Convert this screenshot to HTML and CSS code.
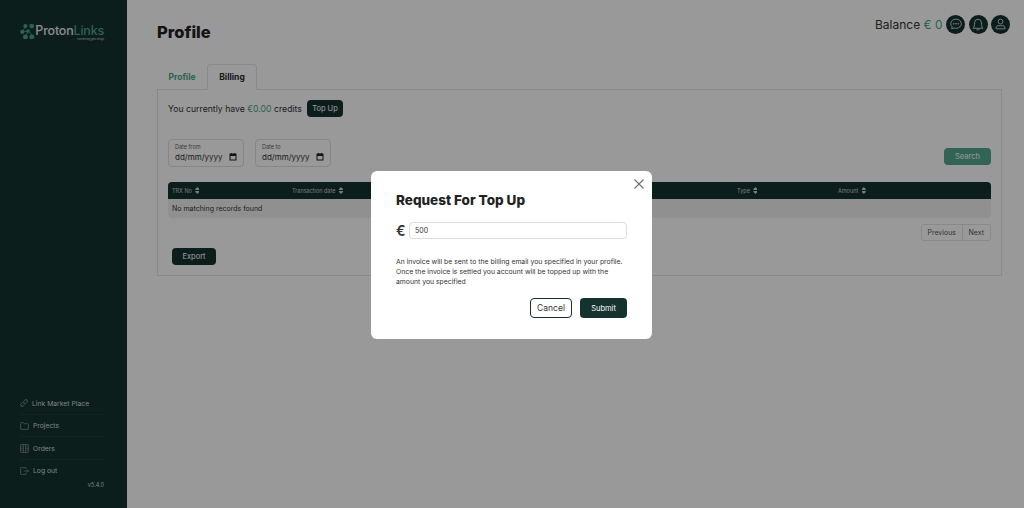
FILE: index.html
```html
<!DOCTYPE html>
<html lang="en-GB">
<head>
    <meta charset="UTF-8">
    <meta name="viewport" content="width=device-width, initial-scale=1.0">
    <title>Profile</title>
    <link rel="stylesheet" href="styles.css">
</head>
<body>
    <aside class="sidebar">
        <div class="logo">
            <svg class="logo-mark" width="17" height="19" viewBox="0 0 17 19">
                <path d="M6 3.500L3 10l6-1 -3 7M9 9l7 7" stroke="#49a387" stroke-width="1" fill="none"/>
                <g fill="#49a387">
                    <circle cx="6" cy="3.500" r="2.300"/>
                    <circle cx="13" cy="3.500" r="2.700"/>
                    <circle cx="2.500" cy="10" r="2.300"/>
                    <circle cx="9" cy="9" r="2"/>
                    <circle cx="6" cy="15.500" r="2.700"/>
                    <circle cx="13" cy="15.500" r="2.700"/>
                </g>
            </svg>
            <div class="logo-text">
                <div class="logo-name">Proton<span class="logo-accent">Links</span></div>
                <div class="logo-sub">connecting gets things</div>
            </div>
        </div>
        <nav class="side-nav">
            <a class="side-link">
                <svg width="8" height="8" viewBox="0 0 16 16" fill="none" stroke="#8d9897" stroke-width="1.800"><path d="M7 9a3 3 0 0 0 4.300 0l2.500-2.500a3 3 0 0 0-4.300-4.300L8 3.700"/><path d="M9 7a3 3 0 0 0-4.300 0L2.200 9.500a3 3 0 0 0 4.300 4.300L8 12.300"/></svg>
                Link Market Place
            </a>
            <a class="side-link">
                <svg width="9" height="8" viewBox="0 0 16 14" fill="none" stroke="#8d9897" stroke-width="1.300"><path d="M1 3V12a1 1 0 0 0 1 1H14a1 1 0 0 0 1-1V4a1 1 0 0 0-1-1H7.500L6 1H2A1 1 0 0 0 1 2z"/></svg>
                Projects
            </a>
            <a class="side-link">
                <svg width="9" height="9" viewBox="0 0 16 16" fill="none" stroke="#8d9897" stroke-width="1.300"><rect x="1" y="1" width="14" height="14" rx="1"/><path d="M6 1V15M10 1V15M2.500 5H4.500M2.500 8H4.500M2.500 11H4.500M11.500 5H13.500M11.500 8H13.500M11.500 11H13.500"/></svg>
                Orders
            </a>
            <a class="side-link">
                <svg width="9" height="8" viewBox="0 0 16 14" fill="none" stroke="#8d9897" stroke-width="1.300"><path d="M11 4V2a1 1 0 0 0-1-1H2A1 1 0 0 0 1 2V12a1 1 0 0 0 1 1H10a1 1 0 0 0 1-1V10"/><path d="M7 7H15M13 5l2 2-2 2"/></svg>
                Log out
            </a>
            <div class="version">v5.4.0</div>
        </nav>
    </aside>

    <main class="content">
        <header class="top-bar">
            <h1 class="page-title">Profile</h1>
            <div class="top-right">
                <span class="balance">Balance <span class="green">€ 0</span></span>
                <span class="round-icon">
                    <svg width="12" height="12" viewBox="0 0 16 16" fill="none" stroke="#d7dcdb" stroke-width="1.200"><path d="M8 1.500C4 1.500 1 4.200 1 7.700c0 1.600.7 3 1.800 4.100L2.200 14.500l3-1.200c.9.300 1.800.5 2.800.5 4 0 7-2.700 7-6.100S12 1.500 8 1.500z"/><circle cx="5" cy="7.700" r=".6"/><circle cx="8" cy="7.700" r=".6"/><circle cx="11" cy="7.700" r=".6"/></svg>
                </span>
                <span class="round-icon">
                    <svg width="12" height="13" viewBox="0 0 16 17" fill="none" stroke="#d7dcdb" stroke-width="1.200"><path d="M8 1.500a4.500 4.500 0 0 0-4.500 4.500c0 4-1 6-2 7.500h13c-1-1.500-2-3.500-2-7.500A4.500 4.500 0 0 0 8 1.500z"/><path d="M6 15.500h4"/></svg>
                </span>
                <span class="round-icon">
                    <svg width="11" height="12" viewBox="0 0 16 17" fill="none" stroke="#d7dcdb" stroke-width="1.300"><circle cx="8" cy="5" r="3.500"/><path d="M1.500 15.500v-1.500a3 3 0 0 1 3-3h7a3 3 0 0 1 3 3v1.500z"/></svg>
                </span>
            </div>
        </header>

        <div class="tabs">
            <a class="tab green">Profile</a>
            <a class="tab tab-active">Billing</a>
        </div>

        <section class="panel">
            <div class="credits">
                <span>You currently have <span class="green">€0.00</span> credits</span>
                <button class="btn btn-dark btn-small">Top Up</button>
            </div>

            <div class="filters">
                <div class="date-box">
                    <label>Date from</label>
                    <div class="date-value">dd/mm/yyyy
                        <svg width="8" height="8" viewBox="0 0 16 16"><path fill="#222" d="M2 1h2V0h2v1h4V0h2v1h2a1 1 0 0 1 1 1v12a1 1 0 0 1-1 1H2a1 1 0 0 1-1-1V2a1 1 0 0 1 1-1zm1 5v7h10V6z"/></svg>
                    </div>
                </div>
                <div class="date-box">
                    <label>Date to</label>
                    <div class="date-value">dd/mm/yyyy
                        <svg width="8" height="8" viewBox="0 0 16 16"><path fill="#222" d="M2 1h2V0h2v1h4V0h2v1h2a1 1 0 0 1 1 1v12a1 1 0 0 1-1 1H2a1 1 0 0 1-1-1V2a1 1 0 0 1 1-1zm1 5v7h10V6z"/></svg>
                    </div>
                </div>
                <button class="btn btn-green">Search</button>
            </div>

            <div class="table">
                <div class="table-head">
                    <span class="col-trx">TRX No <i class="sort"></i></span>
                    <span class="col-date">Transaction date <i class="sort"></i></span>
                    <span class="col-type">Type <i class="sort"></i></span>
                    <span class="col-amount">Amount <i class="sort"></i></span>
                </div>
                <div class="table-empty">No matching records found</div>
            </div>

            <div class="pager">
                <a class="pager-item">Previous</a>
                <a class="pager-item">Next</a>
            </div>

            <button class="btn btn-dark btn-export">Export</button>
        </section>
    </main>

    <div class="backdrop">
        <div class="modal">
            <svg class="modal-close" width="10" height="10" viewBox="0 0 10 10" stroke="#6f6f6f" stroke-width="1.100"><path d="M.5.500l9 9M9.500.500l-9 9"/></svg>
            <h2 class="modal-title">Request For Top Up</h2>
            <div class="amount-row">
                <span class="euro">€</span>
                <div class="amount-input">500</div>
            </div>
            <p class="modal-text">An invoice will be sent to the billing email you specified in your profile.<br>Once the invoice is settled you account will be topped up with the<br>amount you specified</p>
            <div class="modal-actions">
                <button class="btn btn-outline">Cancel</button>
                <button class="btn btn-dark btn-submit">Submit</button>
            </div>
        </div>
    </div>
</body>
</html>
```

FILE: styles.css
```css
* {
    box-sizing: border-box;
    font-family: 'Inter', 'Open Sans', sans-serif;
}

body {
    display: flex;
    height: 100vh;
    margin: 0;
    background-color: #ffffff;
    color: #222;
    overflow: hidden;
}

.green {
    color: #49a387;
}

/* sidebar */
.sidebar {
    width: 127px;
    flex-shrink: 0;
    display: flex;
    flex-direction: column;
    justify-content: space-between;
    padding: 22px 23px 19px 20px;
    background-color: #153230;
}

.logo {
    display: flex;
    align-items: flex-start;
    gap: 0;
}

.logo-text {
    padding-top: 2px;
}

.logo-name {
    font-size: 12.5px;
    font-weight: 500;
    line-height: 14px;
    color: #e6e9e8;
    letter-spacing: -0.2px;
}

.logo-accent {
    color: #49a387;
}

.logo-sub {
    font-size: 2.500px;
    line-height: 3px;
    text-align: right;
    color: #cfd6d4;
}

.side-link {
    display: flex;
    align-items: center;
    gap: 4px;
    height: 22.300px;
    border-bottom: 1px solid #1e3d3a;
    font-size: 6.800px;
    color: #d3d8d7;
}

.side-link:nth-child(4) {
    border-bottom: none;
}

.version {
    text-align: right;
    font-size: 5.500px;
    line-height: 7px;
    color: #d3d8d7;
}

/* main column */
.content {
    flex: 1;
    padding: 0 22px 0 30px;
}

.top-bar {
    display: flex;
    justify-content: space-between;
    align-items: center;
    height: 64px;
    margin-right: -8px;
}

.page-title {
    margin: 0;
    font-size: 16.500px;
    font-weight: 800;
    color: #222;
}

.top-right {
    display: flex;
    align-items: center;
    gap: 3.500px;
    margin: -16px 0 0;
}

.balance {
    font-size: 12px;
    color: #333;
}

.round-icon {
    display: flex;
    justify-content: center;
    align-items: center;
    width: 19px;
    height: 19px;
    border-radius: 50%;
    background-color: #153230;
}

.tabs {
    display: flex;
    height: 25px;
}

.tab {
    display: flex;
    align-items: center;
    justify-content: center;
    width: 50px;
    font-size: 8.500px;
    font-weight: 700;
}

.tab-active {
    color: #2a2a2a;
    background-color: #fff;
    border: 1px solid #e4e4e4;
    border-bottom-color: #fff;
    border-radius: 4px 4px 0 0;
    margin-bottom: -1px;
    position: relative;
}

.panel {
    height: 187px;
    padding: 10px 10px;
    border: 1px solid #e4e4e4;
}

.credits {
    display: flex;
    align-items: center;
    gap: 5px;
    font-size: 8.700px;
    color: #333;
}

/* buttons */
.btn {
    border: none;
    border-radius: 4px;
    font-size: 7.500px;
    color: #fff;
}

.btn-dark {
    background-color: #153230;
}

.btn-small {
    width: 36px;
    height: 17px;
    padding: 0;
}

.btn-green {
    width: 47px;
    height: 17px;
    margin: 9px 0 0 auto;
    padding: 0;
    background-color: #49a387;
    opacity: 0.95;
}

.btn-export {
    display: block;
    width: 44px;
    height: 17px;
    margin: 7px 0 0 4px;
    padding: 0;
}

/* date filters */
.filters {
    display: flex;
    gap: 11px;
    margin-top: 22px;
}

.date-box {
    width: 76px;
    height: 28px;
    padding: 4px 6px;
    border: 1px solid #e0e0e0;
    border-radius: 4px;
}

.date-box label {
    display: block;
    font-size: 5.500px;
    line-height: 7px;
    color: #666;
}

.date-value {
    display: flex;
    justify-content: space-between;
    align-items: center;
    font-size: 8px;
    line-height: 12px;
    color: #333;
}

/* table */
.table {
    margin-top: 15px;
    height: 36px;
    border-radius: 4px;
    background-color: #f1f1f1;
    overflow: hidden;
}

.table-head {
    display: flex;
    align-items: center;
    height: 17px;
    padding-left: 4px;
    background-color: #153230;
    font-size: 5.500px;
    color: #c7cdcc;
}

.table-head span {
    flex-shrink: 0;
}

.col-trx {
    width: 120px;
}

.col-date {
    width: 445px;
}

.col-type {
    width: 101px;
}

.sort {
    display: inline-block;
    width: 4px;
    height: 7px;
    margin-left: 2px;
    vertical-align: -1px;
    background: linear-gradient(to bottom, #c7cdcc 42%, transparent 42%, transparent 58%, #c7cdcc 58%);
    clip-path: polygon(50% 0, 100% 30%, 100% 70%, 50% 100%, 0 70%, 0 30%);
}

.table-empty {
    padding-left: 4px;
    font-size: 7px;
    line-height: 19px;
    color: #333;
}

.pager {
    display: flex;
    justify-content: flex-end;
    margin-top: 6px;
}

.pager-item {
    height: 17px;
    padding: 0 6px;
    border: 1px solid #e4e4e4;
    font-size: 7px;
    line-height: 15px;
    color: #555;
}

.pager-item:first-child {
    padding: 0 5.500px;
    border-radius: 3px 0 0 3px;
}

.pager-item:last-child {
    margin-left: -1px;
    border-radius: 0 3px 3px 0;
}

/* modal */
.backdrop {
    position: fixed;
    inset: 0;
    display: flex;
    justify-content: center;
    align-items: center;
    background-color: rgba(0, 0, 0, 0.4);
}

.modal {
    position: relative;
    width: 281px;
    height: 168px;
    margin: 2px 1px 0 0;
    padding: 21px 25px;
    border-radius: 6px;
    background-color: #fff;
}

.modal-close {
    position: absolute;
    top: 8px;
    right: 8px;
}

.modal-title {
    margin: 0;
    font-size: 13.500px;
    line-height: 17px;
    font-weight: 800;
    color: #222;
}

.amount-row {
    display: flex;
    align-items: center;
    gap: 3px;
    margin-top: 13px;
}

.euro {
    width: 10px;
    font-size: 14px;
    line-height: 17px;
    font-weight: 600;
    color: #333;
}

.amount-input {
    flex: 1;
    height: 17px;
    padding-left: 5px;
    border: 1px solid #dcdcdc;
    border-radius: 4px;
    font-size: 7px;
    line-height: 15px;
    color: #333;
}

.modal-text {
    margin: 18px 0 0;
    font-size: 6.850px;
    line-height: 10px;
    color: #333;
}

.modal-actions {
    display: flex;
    justify-content: flex-end;
    gap: 8px;
    margin-top: 11px;
}

.btn-outline {
    width: 42px;
    height: 20px;
    padding: 0;
    border: 1px solid #153230;
    background-color: #fff;
    color: #333;
    font-size: 8.500px;
}

.btn-submit {
    width: 47px;
    height: 20px;
    padding: 0;
}
```
